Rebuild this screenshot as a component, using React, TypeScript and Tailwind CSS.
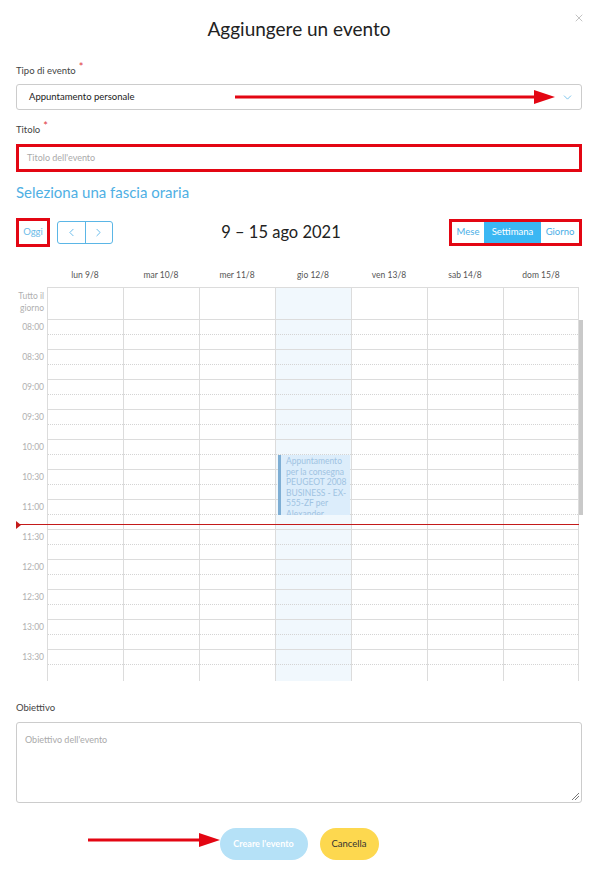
import { X, ChevronDown, ChevronLeft, ChevronRight } from 'lucide-react';

const days = ['lun 9/8', 'mar 10/8', 'mer 11/8', 'gio 12/8', 'ven 13/8', 'sab 14/8', 'dom 15/8'];
const slots = ['08:00', '08:30', '09:00', '09:30', '10:00', '10:30', '11:00', '11:30', '12:00', '12:30', '13:00', '13:30'];
const TODAY = 3;

function Label({ text, required }: { text: string; required?: boolean }) {
  return (
    <div className="flex items-start gap-[3px] text-[9.5px] leading-[14px] text-[#444]">
      <span>{text}</span>
      {required && <span className="-mt-[4px] text-[11px] text-[#e0393e]">*</span>}
    </div>
  );
}

function Arrow({ className, width }: { className: string; width: number }) {
  // red annotation arrow pointing right
  return (
    <svg className={`absolute ${className}`} width={width} height="16" viewBox={`0 0 ${width} 16`}>
      <line x1="0" y1="8" x2={width - 18} y2="8" stroke="#e30613" strokeWidth="3" />
      <polygon points={`${width - 21},1 ${width},8 ${width - 21},15`} fill="#e30613" />
    </svg>
  );
}

function WeekGrid() {
  return (
    <div className="mt-[21px]">
      {/* day headers */}
      <div className="flex h-[19px] pl-[31px]">
        {days.map((d) => (
          <div key={d} className="w-[76px] pt-[1px] text-center text-[8.5px] leading-[12px] text-[#555]">
            {d}
          </div>
        ))}
      </div>

      {/* all-day row */}
      <div className="flex h-[32px]">
        <div className="w-[31px] pr-[3px] pt-[3px] text-right text-[8.5px] leading-[12px] text-[#b0b0b0]">
          Tutto il
          <br />
          giorno
        </div>
        {days.map((d, i) => (
          <div
            key={d}
            className={`w-[76px] border-t border-l border-[#dcdcdc] ${i === 6 ? 'border-r' : ''} ${
              i === TODAY ? 'bg-[#f1f8fd]' : ''
            }`}
          />
        ))}
      </div>

      {/* time slots */}
      <div className="relative">
        {slots.map((s) => (
          <div key={s} className="flex h-[30px]">
            <div className="w-[31px] pr-[3px] pt-[2px] text-right text-[8.5px] leading-[12px] text-[#b0b0b0]">{s}</div>
            {days.map((d, i) => (
              <div
                key={d}
                className={`w-[76px] border-t border-l border-[#dcdcdc] ${i === 6 ? 'border-r' : ''} ${
                  i === TODAY ? 'bg-[#f1f8fd]' : ''
                }`}
              >
                <div className="h-[15px] border-b border-dotted border-[#d4d4d4]" />
              </div>
            ))}
          </div>
        ))}
        <div className="h-[2px] pl-[31px]">
          <div className="flex h-full">
            {days.map((d, i) => (
              <div
                key={d}
                className={`w-[76px] border-l border-[#dcdcdc] ${i === 6 ? 'border-r' : ''} ${
                  i === TODAY ? 'bg-[#f1f8fd]' : ''
                }`}
              />
            ))}
          </div>
        </div>

        {/* event */}
        <div className="absolute left-[262px] top-[136px] h-[60px] w-[72px] overflow-hidden border-l-[3px] border-[#7eaed4] bg-[#dcedfb] pl-[5px] pt-[1px] text-[8.5px] leading-[10.5px] text-[#9fc3e2]">
          Appuntamento per la consegna PEUGEOT 2008 BUSINESS - EX-555-ZF per Alexander
        </div>

        {/* scrollbar */}
        <div className="absolute left-[563px] top-[1px] h-[195px] w-[4px] bg-[#c9c9c9]" />

        {/* current time */}
        <div className="absolute left-0 top-[205px] h-[1px] w-[563px] bg-[#c41a1a]" />
        <div className="absolute left-0 top-[202px] h-0 w-0 border-y-[4px] border-l-[5px] border-y-transparent border-l-[#c41a1a]" />
      </div>
    </div>
  );
}

export default function App() {
  return (
    <div className="relative h-[878px] w-[595px] bg-white pl-4 pr-[13px] font-['Lato','Open_Sans',sans-serif]">
      <button className="absolute right-[10px] top-[12px] text-[#9a9a9a]">
        <X size={12} strokeWidth={1.2} />
      </button>

      <h1 className="pt-[17px] text-center text-[19px] leading-[24px] text-[#222]">Aggiungere un evento</h1>

      <div className="mt-[23px]">
        <Label text="Tipo di evento" required />
      </div>
      <div className="mt-[6px] flex h-[26px] items-center justify-between rounded-[3px] border border-[#ccc] pl-[12px] pr-[7px] text-[9.5px] text-[#222]">
        <span>Appuntamento personale</span>
        <ChevronDown size={13} strokeWidth={1.3} className="text-[#4aaee6]" />
      </div>

      <div className="mt-[13px]">
        <Label text="Titolo" required />
      </div>
      <div className="mt-[7px] flex h-[28px] items-center border-[3px] border-[#e30613] pl-[8px] text-[9px] text-[#aaa]">
        Titolo dell'evento
      </div>

      <div className="mt-[10px] text-[15px] leading-[20px] text-[#4fb0e4]">Seleziona una fascia oraria</div>

      {/* toolbar */}
      <div className="mt-[16px] flex h-[29px] items-center">
        <div className="flex h-[29px] w-[34px] items-center justify-center border-[3px] border-[#e30613] text-[9.5px] text-[#6cbbe8]">
          Oggi
        </div>
        <div className="ml-[7px] flex h-[23px] w-[56px] rounded-[3px] border border-[#5bb6e6] text-[#4aaee6]">
          <div className="flex flex-1 items-center justify-center border-r border-[#5bb6e6]">
            <ChevronLeft size={13} strokeWidth={1.5} />
          </div>
          <div className="flex flex-1 items-center justify-center">
            <ChevronRight size={13} strokeWidth={1.5} />
          </div>
        </div>
        <div className="flex-1 text-center text-[16.5px] text-[#222]">9 – 15 ago 2021</div>
        <div className="flex h-[27px] items-stretch border-[3px] border-[#e30613] text-[9.5px]">
          <div className="flex w-[32px] items-center justify-center text-[#4aaee6]">Mese</div>
          <div className="flex w-[57px] items-center justify-center bg-[#3bb7f3] text-white">Settimana</div>
          <div className="flex w-[38px] items-center justify-center text-[#4aaee6]">Giorno</div>
        </div>
      </div>

      <WeekGrid />

      <div className="mt-[20px]">
        <Label text="Obiettivo" />
      </div>
      <div className="relative mt-[7px] h-[81px] rounded-[3px] border border-[#ccc] pl-[8px] pt-[10px] text-[9px] text-[#aaa]">
        Obiettivo dell'evento
        <svg className="absolute bottom-[2px] right-[2px]" width="8" height="8" viewBox="0 0 8 8">
          <line x1="1" y1="8" x2="8" y2="1" stroke="#777" strokeWidth="1" />
          <line x1="4" y1="8" x2="8" y2="4" stroke="#777" strokeWidth="1" />
        </svg>
      </div>

      <div className="mt-[25px] flex justify-center gap-[12px]">
        <button className="h-[32px] w-[88px] rounded-full bg-[#b5e1f7] text-[9px] font-bold text-white">
          Creare l'evento
        </button>
        <button className="h-[32px] w-[59px] rounded-full bg-[#fdd84f] text-[9.5px] text-[#333]">Cancella</button>
      </div>

      <Arrow className="left-[235px] top-[89px]" width={320} />
      <Arrow className="left-[88px] top-[832px]" width={132} />
    </div>
  );
}
